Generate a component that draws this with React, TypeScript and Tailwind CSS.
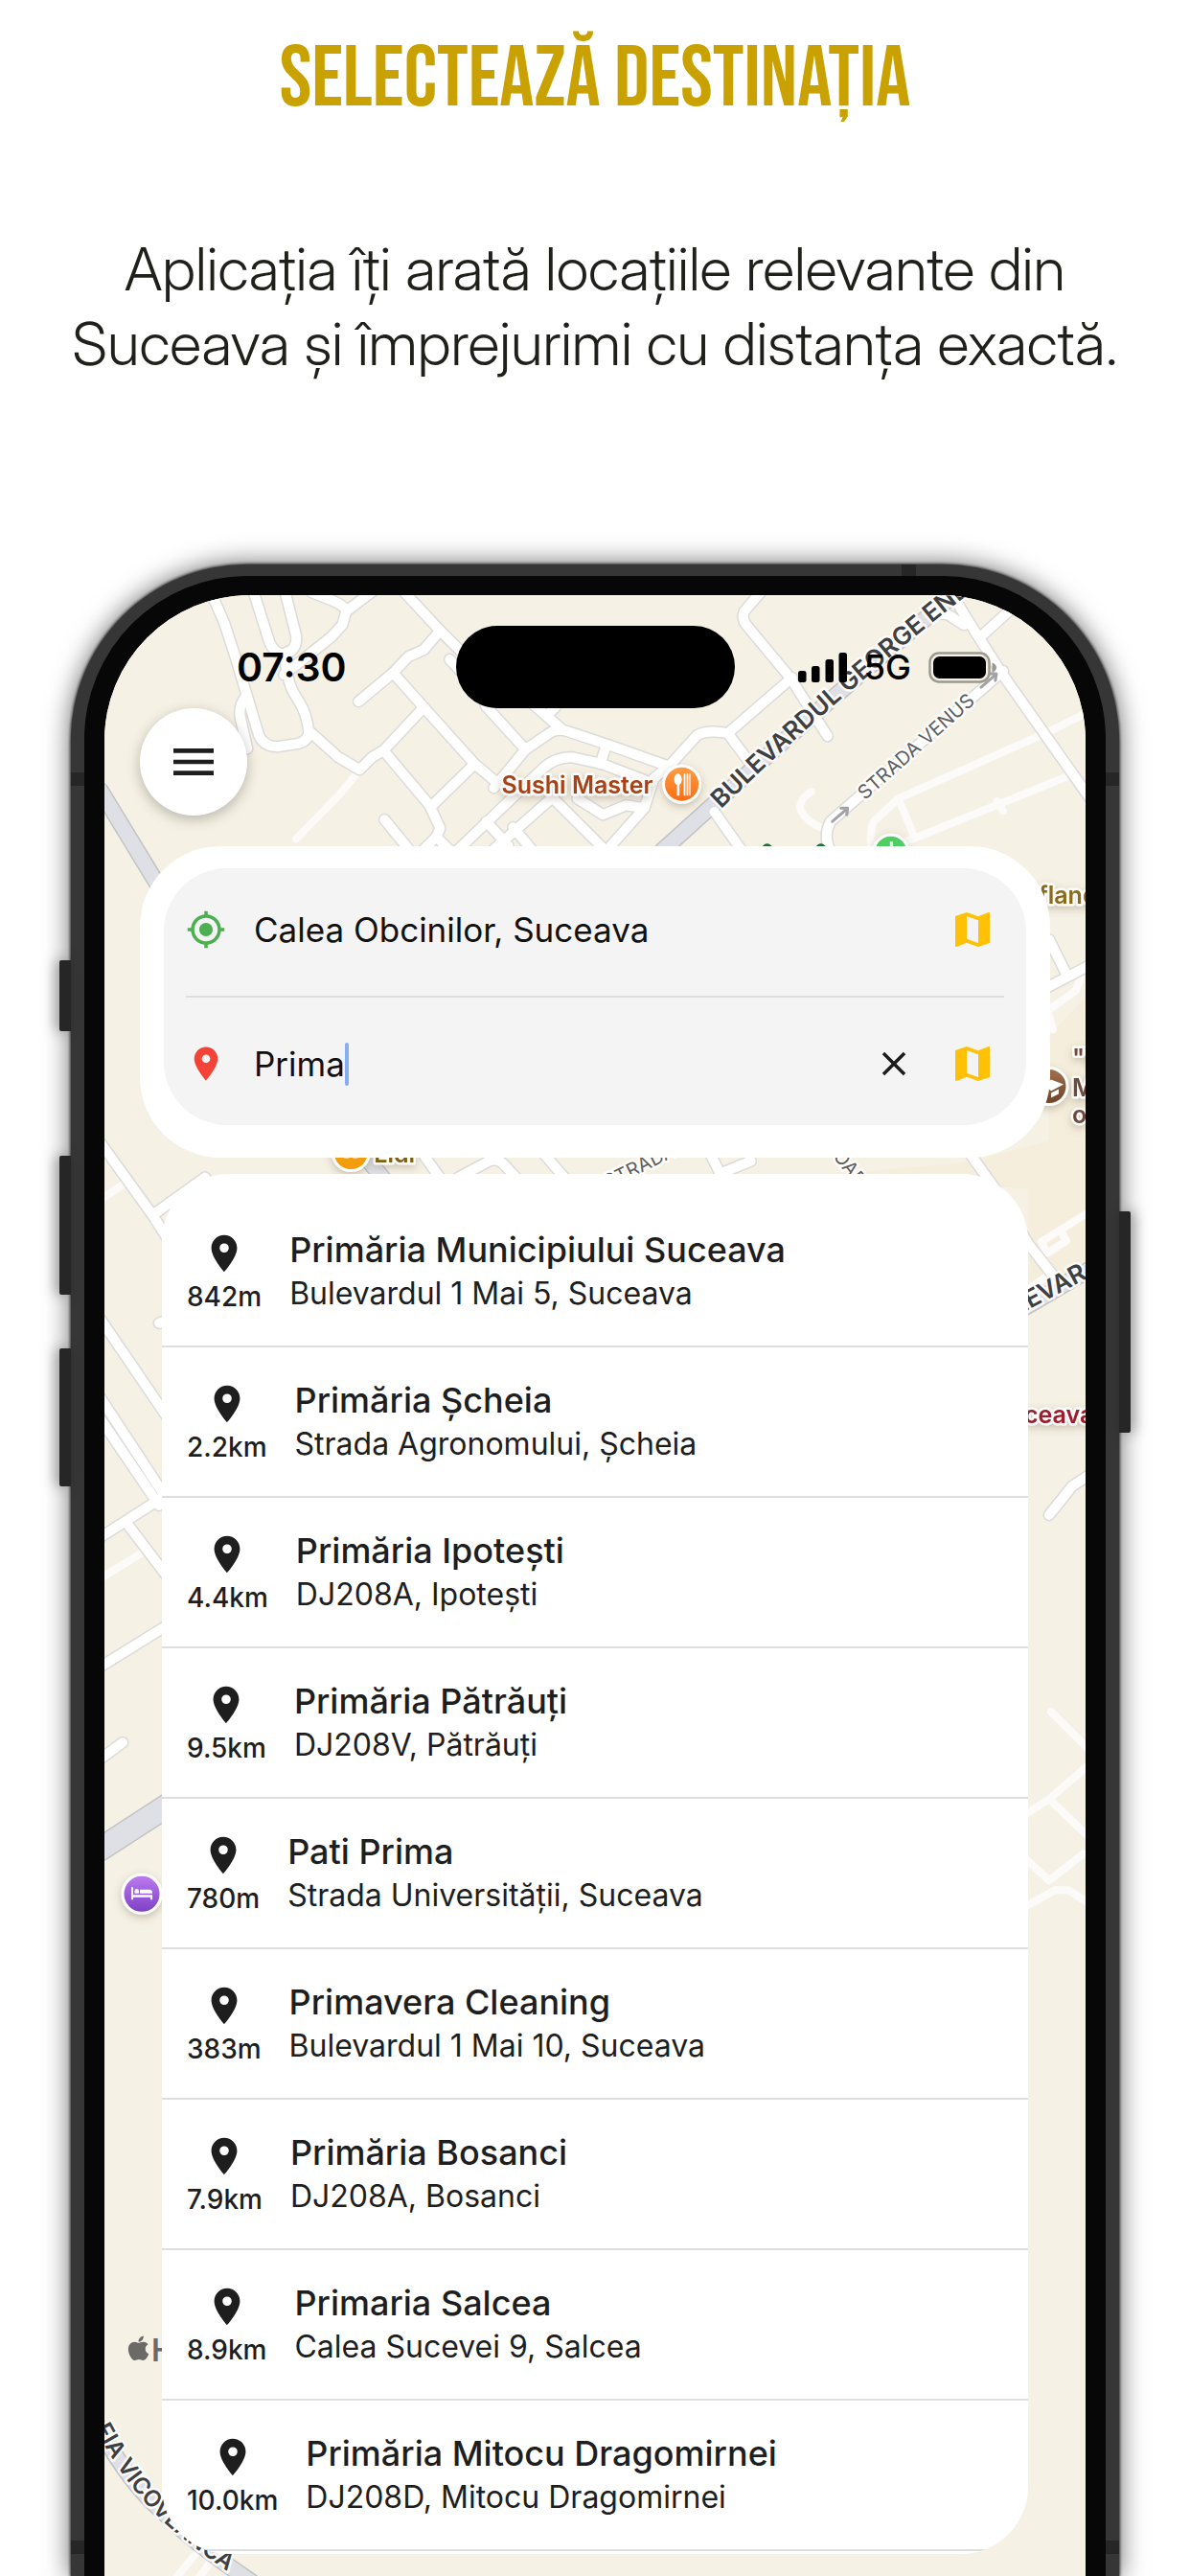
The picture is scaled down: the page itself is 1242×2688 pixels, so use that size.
import { MdClose, MdLocationOn, MdMap, MdMenu, MdMyLocation } from "react-icons/md";
import { FaApple } from "react-icons/fa";

type Place = { name: string; address: string; distance: string };

const places: Place[] = [
  { name: "Primăria Municipiului Suceava", address: "Bulevardul 1 Mai 5, Suceava", distance: "842m" },
  { name: "Primăria Șcheia", address: "Strada Agronomului, Șcheia", distance: "2.2km" },
  { name: "Primăria Ipotești", address: "DJ208A, Ipotești", distance: "4.4km" },
  { name: "Primăria Pătrăuți", address: "DJ208V, Pătrăuți", distance: "9.5km" },
  { name: "Pati Prima", address: "Strada Universității, Suceava", distance: "780m" },
  { name: "Primavera Cleaning", address: "Bulevardul 1 Mai 10, Suceava", distance: "383m" },
  { name: "Primăria Bosanci", address: "DJ208A, Bosanci", distance: "7.9km" },
  { name: "Primaria Salcea", address: "Calea Sucevei 9, Salcea", distance: "8.9km" },
  { name: "Primăria Mitocu Dragomirnei", address: "DJ208D, Mitocu Dragomirnei", distance: "10.0km" },
];

/* Narrow side streets without an outline */
const lanes = [
  "M374 805L353 830L309 875",
  "M1135 743L1090 765L937 833L911 857Q906 868 909 890",
  "M937 833L953 872",
  "M1118 808L940 880",
  "M1040 836L1046 846",
  "M846 826Q828 838 838 850Q846 860 858 864",
  "M105 1251L132 1233",
  "M105 1646L147 1620",
  "M1094 1053L1122 1033L1127 1020",
  "M1094 1060L1098 1074",
  "M1136 1264L1086 1295L1092 1307L1112 1294L1106 1284",
  "M1068 1347L1092 1331",
  "M1096 1785L1136 1825",
  "M1136 1840L1094 1876L1068 1893",
  "M1094 1876L1136 1916",
  "M1130 1933L1094 1961L1068 1937",
  "M1068 1989L1100 1971L1114 1971L1136 1985",
  "M182 2690L208 2658",
  "M206 2690L222 2668",
];

/* Ordinary streets, white with a thin outline */
const streets = [
  "M220 618L234 650L246 687L258 727L270 767Q275 779 290 779L310 776Q322 773 322 763Q320 745 312 732Q302 718 300 704Q296 690 300 680",
  "M256 727Q248 738 251 750L258 781",
  "M264 616L281 670Q287 684 298 682Q310 678 309 664L297 616",
  "M325 618L345 626Q360 632 361 638L357 652L345 665L296 704",
  "M361 638L390 616",
  "M420 616L459 658L487 686L507 737L548 782",
  "M459 658L442 678L426 685L410 702L374 732",
  "M410 702L442 738L495 797L519 817",
  "M469 688L482 702",
  "M442 738L400 783L388 790L375 803L353 790L324 764",
  "M400 783L448 840L459 864L455 873L440 888",
  "M455 873L470 888",
  "M495 797L449 842",
  "M401 855L428 888",
  "M476 888L519 847L566 802Q578 790 596 790L628 797L680 817",
  "M515 822L548 782L570 767Q580 759 592 763L640 779L699 800",
  "M586 761L570 747L554 733M570 747L580 737",
  "M632 778L626 797",
  "M507 857L530 882M535 863L556 888",
  "M515 886L576 832L632 888L672 843L682 812L699 798L727 767Q738 761 759 765L782 796",
  "M602 833L629 850L653 840L672 843",
  "M795 616L776 638Q773 646 779 653L824 707L863 768",
  "M759 765L826 707",
  "M745 847L774 888",
  "M866 888Q858 872 866 857L1046 700",
  "M988 612L1011 650L1045 703L1136 832",
  "M968 640L988 641L1005 652M1023 664L1054 636",
  "M105 1192L159 1267L176 1294M161 1266L214 1228",
  "M105 1376L176 1480M166 1380L176 1376",
  "M105 1458L172 1560M105 1480L166 1570M105 1603L172 1560M132 1588L176 1646",
  "M105 1738L176 1694M105 1834L128 1817",
  "M440 1202L460 1230M478 1228L510 1211Q518 1208 524 1213L540 1230M566 1202L590 1230",
  "M741 1204L751 1224L783 1211",
  "M1009 1200L1040 1243L1072 1297L1102 1335",
  "M1094 980L1112 1016M1090 1031L1136 1007",
  "M1094 1580L1118 1550L1136 1538",
];

/* Boulevards, grey with a darker outline */
const boulevards = [
  "M105 825L172 935",
  "M690 888L762 823Q880 716 1005 612",
  "M105 1928L176 1882",
  "M380 1205L402 1232",
  "M1068 1364L1136 1324",
  "M92 2510Q130 2586 172 2621Q200 2650 268 2696",
];

function CityMap() {
  return (
    <svg
      viewBox="109 621 1023 2067"
      preserveAspectRatio="xMidYMin slice"
      className="absolute inset-0 h-full w-full"
      aria-hidden="true"
      fontFamily="Inter, sans-serif"
      strokeLinejoin="round"
      strokeLinecap="round"
    >
      <defs>
        <linearGradient id="food" x2="0" y2="1">
          <stop stopColor="#ff9f43" />
          <stop offset="1" stopColor="#fb6a12" />
        </linearGradient>
        <linearGradient id="hotel" x2="0" y2="1">
          <stop stopColor="#bd7cf0" />
          <stop offset="1" stopColor="#7c3fc4" />
        </linearGradient>
        <linearGradient id="school" x2="0" y2="1">
          <stop stopColor="#a3714f" />
          <stop offset="1" stopColor="#6d4226" />
        </linearGradient>
        <filter id="lift" x="-30%" y="-30%" width="160%" height="170%">
          <feDropShadow dx="0" dy="3" stdDeviation="4" floodColor="#6b6048" floodOpacity="0.35" />
        </filter>
        <path id="boulevard-line" d="M752 844Q872 727 1020 612" />
        <path id="venus-line" d="M902 835L1040 713" />
        <path id="sofia-line" d="M99 2532Q130 2590 166 2625Q200 2658 280 2710" />
        <path id="strada-line" d="M634 1240L716 1200" />
      </defs>
      <rect x="109" y="621" width="1023" height="2067" fill="#f5f1e4" />
      <path d="M1132 1040L1094 1080V1190L1010 1212L860 1226L1072 1240V1350L1132 1320Z" fill="#f5eedc" />

      <g fill="none">
        <g stroke="#fcfbf9" strokeWidth="8">
          {lanes.map((d) => <path key={d} d={d} />)}
        </g>
        <g stroke="#dcdbd9" strokeWidth="13">
          {streets.map((d) => <path key={d} d={d} />)}
        </g>
        <g stroke="#c3c3c4" strokeWidth="18">
          {boulevards.map((d) => <path key={d} d={d} />)}
        </g>
        <g stroke="#dfe0e5" strokeWidth="15">
          {boulevards.map((d) => <path key={d} d={d} />)}
        </g>
        <g stroke="#ffffff" strokeWidth="10">
          {streets.map((d) => <path key={d} d={d} />)}
        </g>
        <path d="M105 1928L176 1882" stroke="#c3c3c4" strokeWidth="26" />
        <path d="M105 1928L176 1882" stroke="#dfe0e5" strokeWidth="23" />
        <g stroke="#a3a3a6" strokeWidth="3">
          <path d="M868 857L882 845M877 843L884 843L883 850" />
          <path d="M1023 717L1037 705M1032 703L1039 703L1038 710" />
        </g>
      </g>

      <g stroke="#ffffff" strokeWidth="5" paintOrder="stroke" strokeOpacity="0.85">
        <g fill="#3f3f42" fontWeight="600">
          <text fontSize="26"><textPath href="#boulevard-line">BULEVARDUL GEORGE ENESCU</textPath></text>
          <text fontSize="24"><textPath href="#sofia-line">FIA VICOVEANCA</textPath></text>
          <text fontSize="26" transform="translate(1061 1372) rotate(-28)">LEVAR</text>
        </g>
        <g fill="#5d5d60" fontSize="20">
          <text><textPath href="#venus-line">STRADA VENUS</textPath></text>
          <text><textPath href="#strada-line">STRADA</textPath></text>
          <text transform="translate(868 1206) rotate(52)">OAR</text>
        </g>
        <g fontSize="25" fontWeight="600" filter="url(#lift)">
          <text x="523" y="828" fill="#a84314">Sushi Master</text>
          <text x="1083" y="943" fill="#8c6a1a">fland</text>
          <text x="390" y="1212" fill="#7d5f16">Lidl</text>
          <text x="1068" y="1484" fill="#9e1b2d">ceava</text>
          <g fill="#6e4a3c">
            <text x="1118" y="1113">"V</text>
            <text x="1118" y="1143">M</text>
            <text x="1118" y="1171">o</text>
          </g>
        </g>
      </g>
      <path d="M794 884Q800 876 806 884ZM850 884Q856 876 862 884Z" fill="#1f6f35" />

      <g fill="#6b6a66" color="#6b6a66">
        <FaApple x={130} y={2434} size={29} />
        <text x="158" y="2462" fontSize="32" fontWeight="600">Hărți</text>
      </g>

      <g stroke="#ffffff" strokeWidth="3" filter="url(#lift)">
        <circle cx="711" cy="818" r="19" fill="url(#food)" />
        <circle cx="929" cy="889" r="18" fill="#4fcf62" />
        <circle cx="366" cy="1202" r="19" fill="#f39c0c" />
        <circle cx="1094" cy="1133" r="19" fill="url(#school)" />
        <circle cx="148" cy="1975" r="20" fill="url(#hotel)" />
      </g>
      <g fill="#ffffff">
        <ellipse cx="707" cy="813" rx="4" ry="6" />
        <path d="M706 818h2.600v12h-2.600zM713 807h1.800v23h-1.800zM716 807h1.800v23h-1.800zM718.800 807h1.200v23h-1.200z" />
        <path d="M928 878h3v8h-3z" />
        <path d="M359 1202h5v6h-5zM368 1202h5v6h-5z" />
        <path d="M1096 1126L1109 1131L1096 1138L1090 1132ZM1096 1140L1104 1136V1141L1096 1145Z" />
        <path d="M137 1968h2v8h20v5h-2v-2.500h-18v2.500h-2zM140.500 1972a2.200 2.200 0 0 1 4.400 0v2.500h-4.400zM146 1970.500h10q3 0 3 4h-13z" />
      </g>
    </svg>
  );
}

function StatusBar() {
  return (
    <div className="grid grid-cols-[1fr_291px_1fr] items-center text-black">
      <time className="pl-6 text-center text-[41px] leading-none font-semibold">07:30</time>
      <div className="h-[86px] rounded-full bg-black" />
      <div className="flex items-center justify-center gap-[18px] pr-[26px]">
        <svg viewBox="0 0 51 31" className="h-[31px] w-[51px]" aria-label="Semnal" role="img">
          <rect x="0" y="19" width="8.500" height="12" rx="2.500" />
          <rect x="14" y="14" width="8.500" height="17" rx="2.500" />
          <rect x="28.500" y="7" width="8.500" height="24" rx="2.500" />
          <rect x="42.500" y="0" width="8.500" height="31" rx="2.500" />
        </svg>
        <span className="text-[36px] leading-none font-medium">5G</span>
        <svg viewBox="0 0 72 33" className="h-[33px] w-[72px]" aria-label="Baterie" role="img">
          <rect x="1.500" y="1.500" width="62" height="30" rx="9.500" fill="none" stroke="#9c9a90" strokeWidth="2.500" />
          <rect x="5" y="5" width="55" height="23" rx="6.500" />
          <path d="M66.500 11.500q4.500 1.500 4.500 5t-4.500 5z" fill="#9c9a90" />
        </svg>
      </div>
    </div>
  );
}

function MapButton({ label }: { label: string }) {
  return (
    <button type="button" aria-label={label} className="mr-[9px] shrink-0 text-[#ffc107]">
      <MdMap size={48} />
    </button>
  );
}

function SearchCard() {
  return (
    <form className="mt-8 rounded-[84px] bg-white px-[25px] pt-[23px] pb-[34px]">
      <div className="rounded-[66px] bg-[#f4f4f4] px-[23px]">
        <div className="flex h-[128px] items-center gap-[29px]">
          <label htmlFor="from" aria-label="Plecare" className="text-[#4caf50]"><MdMyLocation size={42} /></label>
          <input
            id="from"
            type="text"
            defaultValue="Calea Obcinilor, Suceava"
            className="min-w-0 flex-1 bg-transparent text-[35px] leading-[46px] text-[#111111] outline-none"
          />
          <MapButton label="Alege plecarea pe hartă" />
        </div>
        <div className="my-[5px] h-[2px] bg-[#dedede]" />
        <div className="flex h-[128px] items-center gap-[29px]">
          <label htmlFor="to" aria-label="Destinație" className="text-[#f44336]"><MdLocationOn size={42} /></label>
          <div className="flex min-w-0 flex-1 items-center">
            <input
              id="to"
              type="text"
              defaultValue="Prima"
              className="field-sizing-content max-w-full bg-transparent text-[35px] leading-[46px] text-[#111111] outline-none"
            />
            <span className="h-[45px] w-[4px] rounded-full bg-[#86aef5]" />
          </div>
          <button type="button" aria-label="Șterge" className="mr-[8px] text-[#1c1c1c]"><MdClose size={42} /></button>
          <MapButton label="Alege destinația pe hartă" />
        </div>
      </div>
    </form>
  );
}

function PlaceRow({ place }: { place: Place }) {
  return (
    <li className="border-b-2 border-[#dedede]">
      <button type="button" className="flex h-[155px] w-full items-start gap-[29px] px-[26px] text-left text-[#1e1e1e]">
        <span className="flex flex-col items-center pt-9">
          <MdLocationOn size={46} />
          <span className="text-[28px] leading-[44px] font-medium">{place.distance}</span>
        </span>
        <span className="flex min-w-0 flex-col pt-8">
          <span className="text-[36px] leading-[46px] font-medium">{place.name}</span>
          <span className="text-[32px] leading-[46px]">{place.address}</span>
        </span>
      </button>
    </li>
  );
}

function Phone() {
  return (
    <div className="relative mx-[74px] flex flex-1 flex-col rounded-t-[184px] bg-[#363636] px-[14px] pt-[12px] shadow-[0_0_3px_1px_rgba(0,0,0,0.7),0_0_26px_2px_rgba(0,0,0,0.55)]">
      <div className="absolute top-[413px] -left-[12px] h-[74px] w-[12px] rounded-l-xs bg-[#262626] shadow-[-4px_0_14px_rgba(0,0,0,0.35)]" />
      <div className="absolute top-[617px] -left-[12px] h-[145px] w-[12px] rounded-l-xs bg-[#262626] shadow-[-4px_0_14px_rgba(0,0,0,0.35)]" />
      <div className="absolute top-[818px] -left-[12px] h-[144px] w-[12px] rounded-l-xs bg-[#262626] shadow-[-4px_0_14px_rgba(0,0,0,0.35)]" />
      <div className="absolute top-[675px] -right-[12px] h-[231px] w-[12px] rounded-r-xs bg-[#262626] shadow-[4px_0_14px_rgba(0,0,0,0.35)]" />
      <div className="absolute top-0 right-[212px] h-[14px] w-[15px] bg-[#262626]" />
      <div className="absolute top-[217px] left-0 h-[14px] w-[14px] bg-[#262626]" />
      <div className="absolute top-[217px] right-0 h-[14px] w-[14px] bg-[#262626]" />
      <div className="absolute bottom-[23px] left-0 h-[14px] w-[14px] bg-[#262626]" />
      <div className="absolute right-0 bottom-[23px] h-[14px] w-[14px] bg-[#262626]" />

      <div className="relative flex flex-1 flex-col rounded-t-[170px] bg-[#070707] px-[21px] pt-[20px]">
        <div className="relative flex-1 overflow-hidden rounded-t-[152px] bg-[#f5f1e4]">
          <CityMap />
          <div className="relative px-[37px] pt-[32px] pb-[23px]">
            <div className="-mx-[37px]">
              <StatusBar />
            </div>
            <button
              type="button"
              aria-label="Meniu"
              className="flex size-[112px] items-center justify-center rounded-full bg-white text-[#1e1e1e] shadow-[0_4px_14px_rgba(0,0,0,0.25)]"
            >
              <MdMenu size={56} />
            </button>
            <SearchCard />
            <ul className="mx-[23px] mt-[17px] overflow-hidden rounded-[70px] bg-white pt-[24px] pb-[3px]">
              {places.map((place) => <PlaceRow key={place.name} place={place} />)}
            </ul>
          </div>
        </div>
      </div>
    </div>
  );
}

export default function App() {
  return (
    <main className="flex min-h-screen flex-col overflow-hidden bg-white font-[Inter,sans-serif]">
      <header className="px-8 pt-[35px] text-center">
        <h1 className="font-['Bebas_Neue',Oswald,sans-serif] text-[90px] leading-[96px] font-normal text-[#c9a100]">
          SELECTEAZĂ DESTINAȚIA
        </h1>
        <p className="mt-[111px] pb-[191px] font-['Inter_Display','Inter_Tight',Inter,sans-serif] text-[62px] leading-[78px] font-light text-[#1f1f1b]">
          Aplicația îți arată locațiile relevante din
          <br />
          Suceava și împrejurimi cu distanța exactă.
        </p>
      </header>
      <Phone />
    </main>
  );
}
